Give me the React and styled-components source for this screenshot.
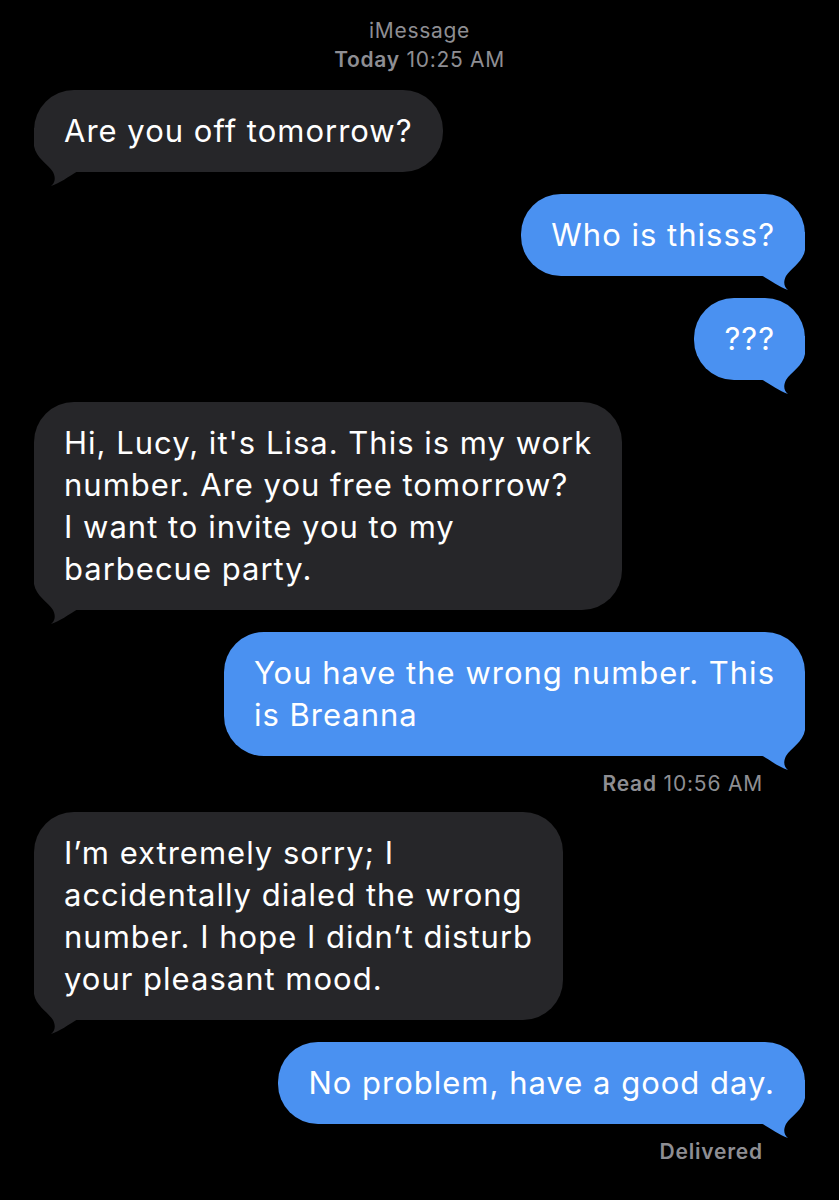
import styled, { createGlobalStyle } from "styled-components";

const GlobalStyle = createGlobalStyle`
	html, body {
		margin: 0;
		padding: 0;
		background: #000000;
	}
`;

const GRAY = "#262629";
const BLUE = "#4a91f1";

const messages = [
	{ from: "them", lines: ["Are you off tomorrow?"] },
	{ from: "me", lines: ["Who is thisss?"] },
	{ from: "me", lines: ["???"] },
	{
		from: "them",
		lines: [
			"Hi, Lucy, it's Lisa. This is my work",
			"number. Are you free tomorrow?",
			"I want to invite you to my",
			"barbecue party.",
		],
	},
	{
		from: "me",
		lines: ["You have the wrong number. This", "is Breanna"],
		receipt: { label: "Read", time: "10:56 AM" },
	},
	{
		from: "them",
		lines: [
			"I\u2019m extremely sorry; I",
			"accidentally dialed the wrong",
			"number. I hope I didn\u2019t disturb",
			"your pleasant mood.",
		],
	},
	{
		from: "me",
		lines: ["No problem, have a good day."],
		receipt: { label: "Delivered" },
	},
];

export default function App() {
	return (
		<>
			<GlobalStyle />
			<Screen>
				<Header>
					<div>iMessage</div>
					<div>
						<b>Today</b> 10:25 AM
					</div>
				</Header>
				<Thread>
					{messages.map((msg, index) => (
						<Message key={index} msg={msg} />
					))}
				</Thread>
			</Screen>
		</>
	);
}

const Message = ({ msg }) => {
	const mine = msg.from === "me";
	return (
		<>
			<Row $mine={mine}>
				<Bubble $mine={mine}>
					<Tail $mine={mine} width="44" height="60" viewBox="0 -44 44 60">
						<path d="M0,-44 L0,-26 C2,-14 14,-8 19,0 C22,6 21,11 17,14 C26,11 34,5 44,-1 L44,-44 Z" />
					</Tail>
					<Text>
						{msg.lines.map((line, i) => (
							<span key={i}>
								{line}
								{i < msg.lines.length - 1 ? <br /> : null}
							</span>
						))}
					</Text>
				</Bubble>
			</Row>
			{msg.receipt ? (
				<Receipt>
					<b>{msg.receipt.label}</b>
					{msg.receipt.time ? " " + msg.receipt.time : null}
				</Receipt>
			) : null}
		</>
	);
};

const Screen = styled.div`
	width: 839px;
	min-height: 1200px;
	box-sizing: border-box;
	padding: 16px 34px 0;
	background: #000000;
	font-family: Inter, "Noto Sans", sans-serif;
	display: flex;
	flex-direction: column;
`;

const Header = styled.div`
	text-align: center;
	color: #8e8e93;
	font-size: 21px;
	letter-spacing: 0.7px;
	line-height: 29px;
	margin-bottom: 16px;
	b {
		font-weight: 600;
	}
`;

const Thread = styled.div`
	display: flex;
	flex-direction: column;
	gap: 22px;
`;

const Row = styled.div`
	display: flex;
	justify-content: ${(p) => (p.$mine ? "flex-end" : "flex-start")};
`;

const Bubble = styled.div`
	position: relative;
	background: ${(p) => (p.$mine ? BLUE : GRAY)};
	color: #ffffff;
	border-radius: 40px;
	padding: 20px 30px;
`;

const Tail = styled.svg`
	position: absolute;
	bottom: -16px;
	${(p) => (p.$mine ? "right: 0; transform: scaleX(-1);" : "left: 0;")}
	fill: ${(p) => (p.$mine ? BLUE : GRAY)};
`;

const Text = styled.div`
	position: relative;
	font-size: 31px;
	letter-spacing: 1px;
	line-height: 42px;
	white-space: nowrap;
`;

const Receipt = styled.div`
	align-self: flex-end;
	margin: -8px 42px -8px 0;
	color: #8e8e93;
	font-size: 21px;
	letter-spacing: 0.8px;
	line-height: 28px;
	b {
		font-weight: 600;
	}
`;
